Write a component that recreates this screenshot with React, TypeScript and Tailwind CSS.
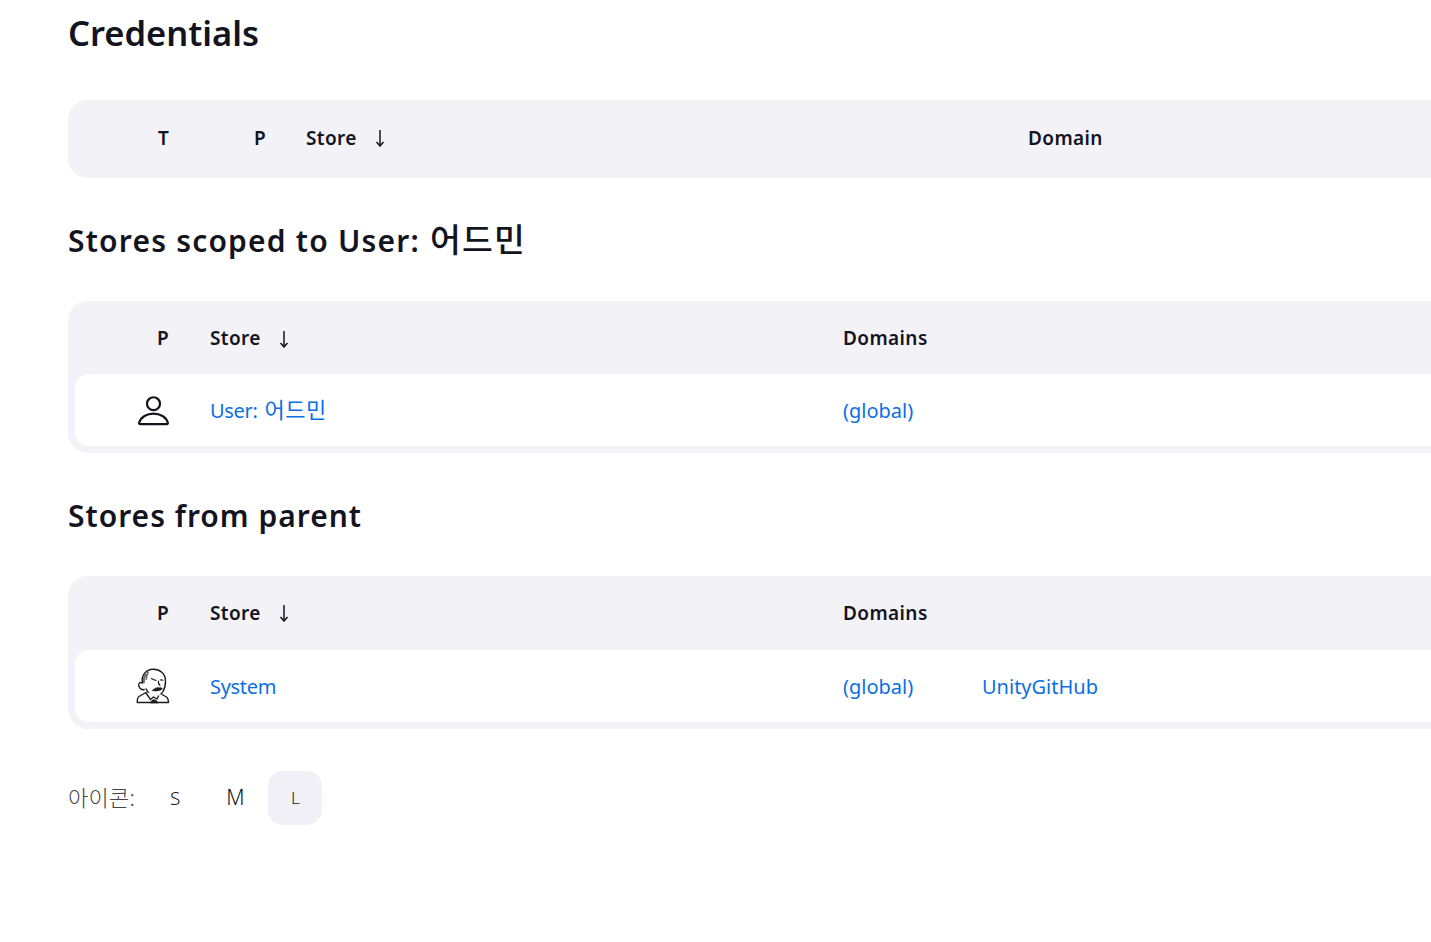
const fontStack = "font-['Noto_Sans','Noto_Sans_CJK_KR',sans-serif]"

const SortArrow = () => (
  <svg viewBox="0 0 10 18" className="h-[18px] w-[10px] text-[#14141f]" fill="none" stroke="currentColor" strokeWidth="1.5">
    <path d="M5 1v15.500" />
    <path d="M1.500 13l3.500 4 3.500-4" />
  </svg>
)

const HeaderLabel = ({ children, className = "" }: { children: React.ReactNode; className?: string }) => (
  <span className={`text-[19px] font-semibold tracking-[0.4px] text-[#14141f] ${className}`}>{children}</span>
)

const StoreHeader = () => (
  <span className="flex items-center">
    <HeaderLabel>Store</HeaderLabel>
    <span className="ml-[18px] flex">
      <SortArrow />
    </span>
  </span>
)

const PersonIcon = () => (
  <svg viewBox="0 0 32 32" className="mr-[1px] mt-[2px] h-8 w-[31px] text-[#14141f]" fill="none" stroke="currentColor" strokeWidth="2.300">
    <circle cx="16" cy="8.500" r="6.700" />
    <path d="M2.500 29.600c-1.200 0-1.500-.7-1.200-1.800C3 22.400 9 18.600 16 18.600s13 3.800 14.700 9.200c.3 1.100 0 1.800-1.200 1.800z" strokeLinejoin="round" />
  </svg>
)

// rough drawing of the jenkins butler head
const JenkinsIcon = () => (
  <svg viewBox="0 0 34 36" className="h-9 w-[34px] text-[#1c1c22]" fill="none" stroke="currentColor" strokeWidth="1.400" strokeLinecap="round" strokeLinejoin="round">
    <path d="M6.500 15C4.800 7.500 10 1.500 17 1.300c7-.2 12.300 4.600 12.500 11.200.1 4-.6 7.800-2.500 11-1.700 2.800-4.700 4.500-8 4.300-4.200-.3-7.300-3-8.800-6.800" fill="#fff" />
    <path d="M6.500 15c-2.500-1.300-4.300.3-3.800 2.700.5 2.500 3 4.600 5.500 3.800" fill="#fff" />
    <path d="M9.500 6.500C7.800 8.800 7.500 11.500 8 14.500M12 4.500c-1.300 2-1.800 4-1.700 6.500" stroke="#6a6a72" strokeWidth="1.800" />
    <path d="M15.500 10.500c1.500 1 3 1.600 4.500 1.800M24.500 12c.9-.2 1.700-.2 2.400.2" strokeWidth="1.200" />
    <path d="M22.500 13c-.3 2 .2 3.600 1.500 4.300" strokeWidth="1.200" />
    <path d="M16.500 22.500c2.300-2.500 4.800-3.300 6.500-2.500 1.400-.6 2.600-.3 3.300.8-2 1.800-6 2.800-9.800 1.700z" fill="#1c1c22" strokeWidth=".8" />
    <path d="M10 24.500L3 28.500c-1.300.8-1.800 3-1.800 6h31.300c-.1-2.600-.6-4.500-2-5.500l-4.500-2.500" fill="#fff" />
    <path d="M10 25l4.500 6.500 3-2.500M22.500 28l-1.500 3-3.500-2" />
    <path d="M14.500 34.500c1-2 2.200-2.800 3.500-2.600 1.400-.2 2.700.6 3.700 2.600z" fill="#1c1c22" strokeWidth=".8" />
  </svg>
)

const StoreLink = ({ children, className = "" }: { children: React.ReactNode; className?: string }) => (
  <a className={`text-[20px] leading-none text-[#0b6fe3] ${className}`}>{children}</a>
)

const StoresTable = ({
  icon,
  store,
  domains,
  headerHeight,
  storeOffset = "pt-[4px]",
}: {
  icon: React.ReactNode
  store: React.ReactNode
  domains: string[]
  headerHeight: string
  storeOffset?: string
}) => (
  <div className="w-[1500px] rounded-[20px] bg-[#f2f2f7] px-[7px] pb-[7px]">
    <div className={`flex items-center ${headerHeight}`}>
      <div className="flex w-[95px] justify-end">
        <HeaderLabel className="mr-[1px]">P</HeaderLabel>
      </div>
      <div className="ml-[40px] w-[633px]">
        <StoreHeader />
      </div>
      <HeaderLabel>Domains</HeaderLabel>
    </div>
    <div className="flex h-[72px] items-center rounded-[14px] bg-white">
      <div className="flex w-[95px] justify-end">{icon}</div>
      <div className={`ml-[40px] w-[633px] ${storeOffset}`}>
        <StoreLink className="tracking-[-0.3px]">{store}</StoreLink>
      </div>
      <div className="flex pt-[4px]">
        {domains.map((domain) => (
          <div key={domain} className="w-[139px]">
            <StoreLink>{domain}</StoreLink>
          </div>
        ))}
      </div>
    </div>
  </div>
)

export default function App() {
  return (
    <div className={`h-[942px] w-full overflow-hidden bg-white pl-[68px] ${fontStack}`}>
      <h1 className="flex h-[65px] items-center text-[34.500px] font-semibold text-[#14141f]">Credentials</h1>
      <div className="mt-[35px] box-content flex h-[76px] w-[1500px] items-center rounded-[20px] bg-[#f2f2f7] pb-[2px]">
        <HeaderLabel className="ml-[90px] w-[96px]">T</HeaderLabel>
        <HeaderLabel className="w-[52px]">P</HeaderLabel>
        <div className="w-[722px]">
          <StoreHeader />
        </div>
        <HeaderLabel>Domain</HeaderLabel>
      </div>

      <h2 className="mb-[39px] mt-10 h-[44px] text-[30px] leading-[42px] font-semibold tracking-[1.200px] text-[#14141f]">
        Stores scoped to User: <span className="ml-[1px] text-[33.500px] font-medium">어드민</span>
      </h2>
      <StoresTable
        icon={<PersonIcon />}
        store={
          <>
            User: <span className="ml-[2px] text-[22px] tracking-[0.500px]">어드민</span>
          </>
        }
        domains={["(global)"]}
        headerHeight="h-[73px] pt-[2px]"
        storeOffset="pt-[2px]"
      />

      <h2 className="mb-[39px] mt-10 h-[44px] text-[30px] leading-[46px] font-semibold tracking-[1px] text-[#14141f]">Stores from parent</h2>
      <StoresTable icon={<JenkinsIcon />} store="System" domains={["(global)", "UnityGitHub"]} headerHeight="h-[74px]" />

      <div className="mt-[42px] flex items-center">
        <span className="mr-[13px] pb-[2px] text-[22px] font-light tracking-[0.300px] text-[#44444c]">아이콘:</span>
        <div className="flex gap-[6px]">
          <button className="flex h-[54px] w-[54px] items-center justify-center rounded-[15px] text-[19px] font-light text-[#14141f]">S</button>
          <button className="flex h-[54px] w-[54px] items-center justify-center rounded-[15px] text-[21px] font-light text-[#14141f]">M</button>
          <button className="flex h-[54px] w-[54px] items-center justify-center rounded-[15px] bg-[#f0f0f6] text-[17px] font-light text-[#14141f]">L</button>
        </div>
      </div>
    </div>
  )
}
